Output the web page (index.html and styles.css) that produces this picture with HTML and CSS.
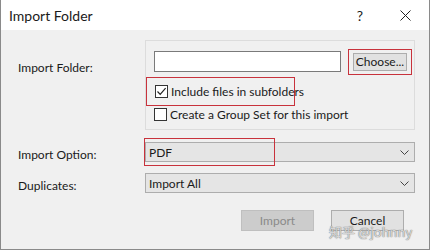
FILE: index.html
```
<!DOCTYPE html>
<html lang="en">
<head>
    <meta charset="UTF-8">
    <title>Import Folder</title>
    <link rel="stylesheet" href="styles.css">
</head>
<body>
    <div class="window">
        <div class="titlebar">
            <span class="title">Import Folder</span>
            <span class="help">?</span>
            <span class="close">
                <svg width="11" height="11" viewBox="0 0 11 11"><path d="M0.5 0.5 L10.5 10.5 M10.5 0.5 L0.5 10.5" fill="none" stroke="#222" stroke-width="1"/></svg>
            </span>
        </div>

        <div class="dialog">
            <div class="row row-folder">
                <label class="label label-folder">Import Folder:</label>
                <div class="groupbox">
                    <div class="folder-line">
                        <input type="text" class="textbox">
                        <div class="mark mark-choose">
                            <button class="button choose">Choose...</button>
                        </div>
                    </div>
                    <div class="mark mark-include">
                        <div class="check">
                            <span class="box checked">
                                <svg width="11" height="11" viewBox="0 0 11 11"><path d="M1.5 5.5 L4.2 8.3 L9.6 2.2" fill="none" stroke="#222" stroke-width="1.2"/></svg>
                            </span>
                            <span>Include files in subfolders</span>
                        </div>
                    </div>
                    <div class="check check-group">
                        <span class="box"></span>
                        <span>Create a Group Set for this import</span>
                    </div>
                </div>
            </div>

            <div class="row row-option">
                <label class="label">Import Option:</label>
                <div class="select">
                    <span>PDF</span>
                    <svg class="chevron" width="9" height="5" viewBox="0 0 9 5"><path d="M0.5 0.5 L4.5 4.5 L8.5 0.5" fill="none" stroke="#444" stroke-width="1"/></svg>
                </div>
                <div class="mark-option"></div>
            </div>

            <div class="row row-dup">
                <label class="label">Duplicates:</label>
                <div class="select">
                    <span>Import All</span>
                    <svg class="chevron" width="9" height="5" viewBox="0 0 9 5"><path d="M0.5 0.5 L4.5 4.5 L8.5 0.5" fill="none" stroke="#444" stroke-width="1"/></svg>
                </div>
            </div>

            <div class="actions">
                <button class="button import" disabled>Import</button>
                <button class="button cancel">Cancel</button>
            </div>
        </div>

        <div class="watermark">知乎 @johnny</div>
    </div>
</body>
</html>
```

FILE: styles.css
```
* {
    box-sizing: border-box;
    margin: 0;
    padding: 0;
}

body {
    background: #fff;
    font-family: Lato, "Noto Sans", sans-serif;
    font-size: 12px;
    color: #1a1a1a;
}

.window {
    position: relative;
    width: 430px;
    height: 250px;
    border: 1px solid #8a8a8a;
    border-top: none;
    display: flex;
    flex-direction: column;
}

.titlebar {
    height: 30px;
    background: #fff;
    display: flex;
    align-items: center;
    padding-left: 8px;
    font-size: 14px;
}

.title {
    flex: 1;
}

.help {
    width: 20px;
    font-size: 14px;
    margin-right: 25px;
    text-align: center;
}

.close {
    width: 20px;
    height: 11px;
    margin-right: 14px;
    display: flex;
    justify-content: center;
}

.dialog {
    flex: 1;
    background: #f0f0f0;
    padding: 10px 14px 0 17px;
    display: flex;
    flex-direction: column;
    white-space: nowrap;
}

.row {
    position: relative;
    display: grid;
    grid-template-columns: 127px 1fr;
}

.label {
    padding-top: 5px;
}

.label-folder {
    padding-top: 20px;
}

.groupbox {
    height: 90px;
    border: 1px solid #dcdcdc;
    padding: 10px 0 0 8px;
}

.folder-line {
    display: flex;
    align-items: center;
    height: 21px;
}

.textbox {
    width: 187px;
    height: 21px;
    border: 1px solid #7a7a7a;
    background: #fff;
}

.mark {
    border: 1px solid #c8323c;
}

.mark-choose {
    margin-left: 7px;
    padding: 3px 4px;
}

.button {
    font-family: inherit;
    font-size: 12px;
    color: #1a1a1a;
    background: #e1e1e1;
    border: 1px solid #adadad;
}

.choose {
    width: 54px;
    height: 18px;
    display: flex;
    align-items: center;
    justify-content: center;
}

.mark-include {
    width: 149px;
    height: 29px;
    margin: 5px 0 0 -8px;
    padding-left: 8px;
    display: flex;
    align-items: center;
}

.check {
    display: flex;
    align-items: center;
    gap: 3px;
}

.check-group {
    margin-top: 1px;
}

.box {
    width: 13px;
    height: 13px;
    border: 1px solid #333;
    background: #fff;
    display: flex;
    align-items: center;
    justify-content: center;
}

.row-option {
    margin-top: 12px;
}

.row-dup {
    margin-top: 11px;
}

.select {
    height: 20px;
    background: #e5e5e5;
    border: 1px solid #adadad;
    display: flex;
    align-items: center;
    padding: 0 5px 0 3px;
}

.select span {
    flex: 1;
}

.mark-option {
    position: absolute;
    left: 126px;
    top: -4px;
    width: 131px;
    height: 28px;
    border: 1px solid #c8323c;
}

.actions {
    margin-top: 17px;
    display: flex;
    justify-content: flex-end;
    gap: 17px;
    padding-right: 11px;
}

.actions .button {
    width: 73px;
    height: 21px;
}

.import {
    background: #cccccc;
    border-color: #bfbfbf;
    color: #8a8a8a;
}

.watermark {
    position: absolute;
    left: 328px;
    top: 222px;
    font-family: "Noto Sans CJK SC", Lato, sans-serif;
    font-size: 13px;
    color: rgba(255, 255, 255, 0.7);
    text-shadow: 0 0 1px #777, 0 0 1px #777;
}
```
